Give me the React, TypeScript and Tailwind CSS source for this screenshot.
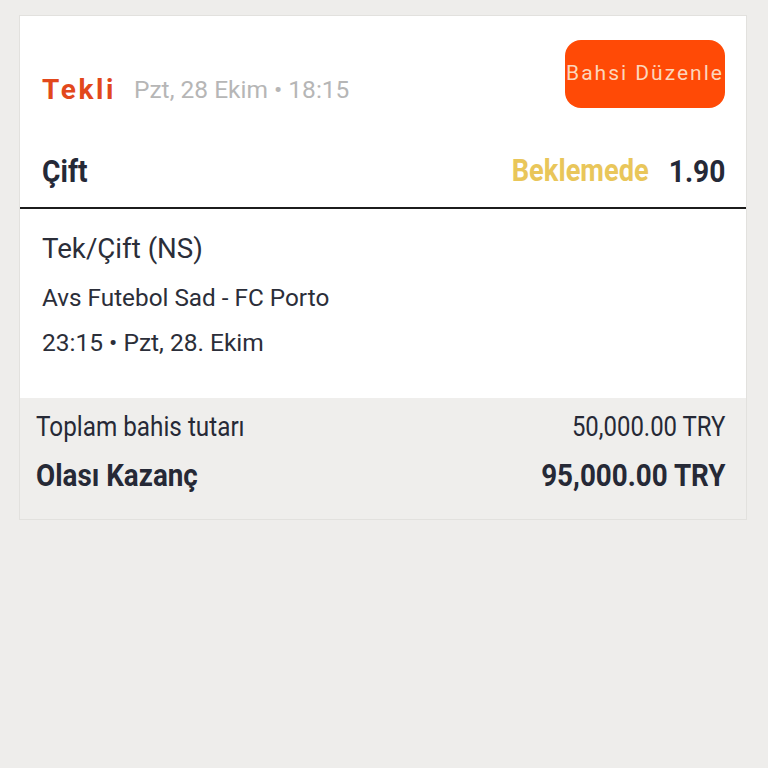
// Bahis kuponu kartı — tek maç, Tek/Çift seçimi.

const ROBOTO = "font-['Roboto','Liberation_Sans',sans-serif]";

// Dar (condensed) yazı için Roboto'yu yatayda sıkıştırıyoruz.
function Narrow({
  children,
  className = "",
  origin = "left",
}: {
  children: React.ReactNode;
  className?: string;
  origin?: "left" | "right";
}) {
  return (
    <span
      className={`inline-block scale-x-[0.88] whitespace-nowrap ${
        origin === "left" ? "origin-left" : "origin-right"
      } ${className}`}
    >
      {children}
    </span>
  );
}

export default function App() {
  return (
    <div className={`min-h-screen bg-[#eeedeb] pt-[15px] pr-[21px] pl-[19px] ${ROBOTO}`}>
      <div className="border border-[#e2e1de] bg-white">
        {/* başlık: kupon tipi, tarih, düzenle butonu */}
        <div className="flex h-[119px] items-start justify-between pt-[24px] pr-[21px] pl-[22px]">
          <div className="mt-[34px] flex items-center gap-[18px]">
            <span className="text-[28px] leading-[32px] font-bold tracking-[2.6px] text-[#e2481c]">
              Tekli
            </span>
            <span className="text-[24.5px] leading-[32px] text-[#b6b6b6]">
              Pzt, 28 Ekim • 18:15
            </span>
          </div>
          <button
            type="button"
            className="flex h-[68px] w-[160px] items-center justify-center rounded-[16px] bg-[#ff4a06] text-[21px] tracking-[2px] whitespace-nowrap text-[#fcd6bc]"
          >
            Bahsi Düzenle
          </button>
        </div>

        {/* seçim ve oran */}
        <div className="flex h-[74px] items-center justify-between border-b-2 border-[#1c1c1c] pr-[21px] pl-[22px]">
          <Narrow className="text-[32px] font-bold text-[#252937]">Çift</Narrow>
          <div className="flex items-center">
            <Narrow origin="right" className="text-[31px] font-bold text-[#e9c65a]">
              Beklemede
            </Narrow>
            <Narrow origin="right" className="ml-[12px] text-[32px] font-bold text-[#252937]">
              1.90
            </Narrow>
          </div>
        </div>

        {/* maç bilgisi */}
        <div className="flex h-[189px] flex-col pt-[23px] pl-[22px] text-[#2b2e39]">
          <span className="text-[27.7px] leading-[34px]">Tek/Çift (NS)</span>
          <span className="mt-[17px] text-[24.3px] leading-[30px]">
            Avs Futebol Sad - FC Porto
          </span>
          <span className="mt-[15px] text-[24.5px] leading-[30px]">
            23:15 • Pzt, 28. Ekim
          </span>
        </div>

        {/* toplamlar */}
        <div className="flex h-[121px] flex-col bg-[#efeeec] pt-[14px] pr-[21px] pl-[16px] text-[#262936]">
          <div className="flex items-center justify-between">
            <Narrow className="text-[27.6px] leading-[30px]">Toplam bahis tutarı</Narrow>
            <Narrow origin="right" className="text-[27.2px] leading-[30px]">
              50,000.00 TRY
            </Narrow>
          </div>
          <div className="mt-[17px] flex items-center justify-between">
            <Narrow className="text-[31.6px] leading-[34px] font-bold">Olası Kazanç</Narrow>
            <Narrow origin="right" className="text-[31.6px] leading-[34px] font-bold">
              95,000.00 TRY
            </Narrow>
          </div>
        </div>
      </div>
    </div>
  );
}
